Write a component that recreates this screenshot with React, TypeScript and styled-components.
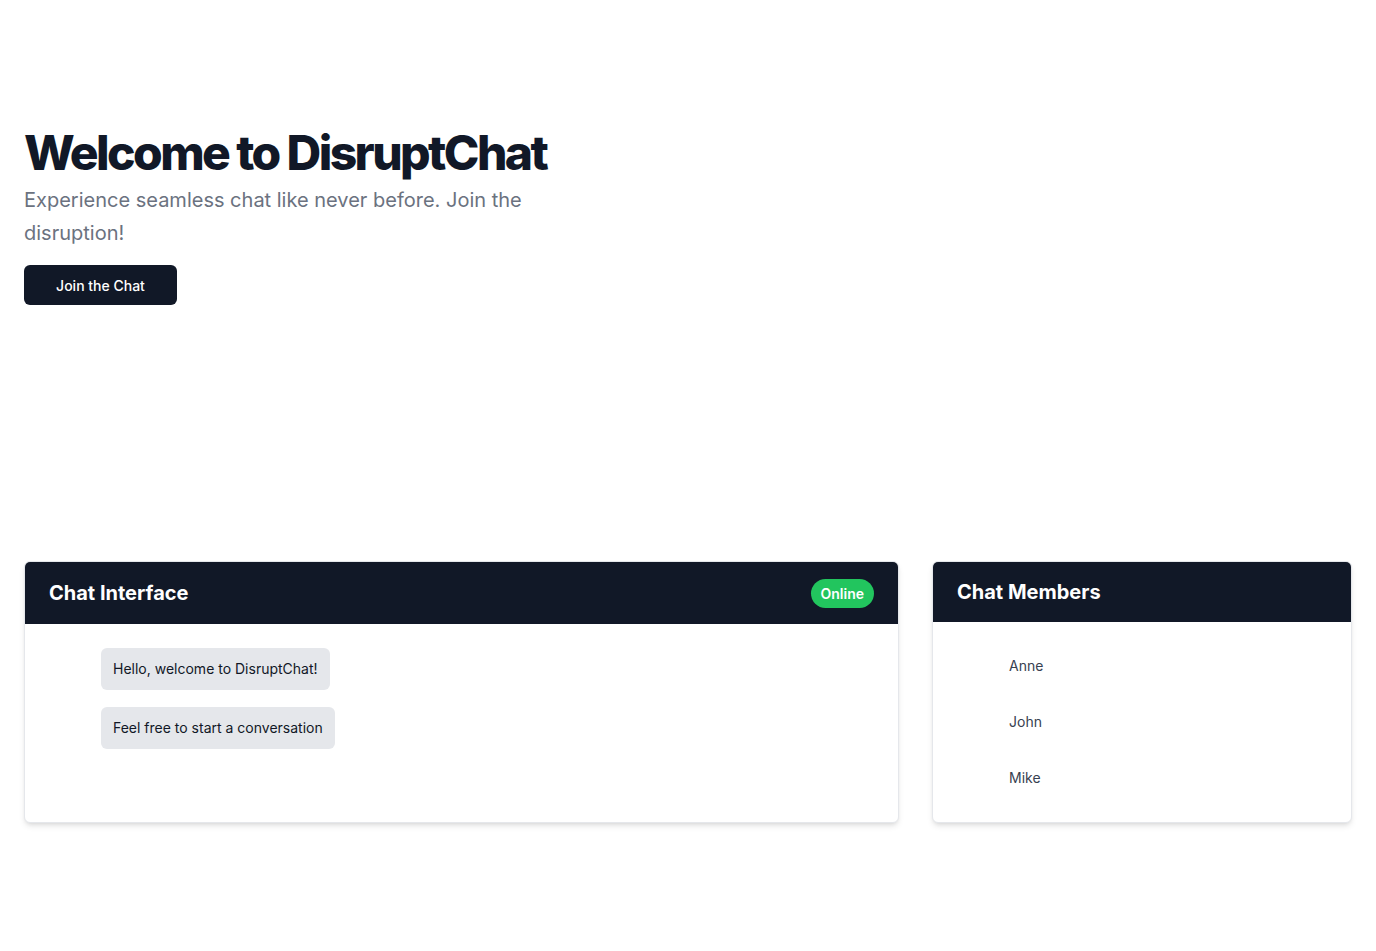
import React from "react";
import styled, { createGlobalStyle } from "styled-components";

const Global = createGlobalStyle`
  * { box-sizing: border-box; }
  body {
    margin: 0;
    background: #ffffff;
    font-family: Inter, "Noto Sans", sans-serif;
    color: #111827;
  }
`;

const Page = styled.div`
  padding: 24px;
`;

const Hero = styled.section`
  padding-top: 100px;
  padding-bottom: 256px;
  max-width: 560px;
`;

const Title = styled.h1`
  margin: 0;
  font-size: 48px;
  line-height: 58px;
  font-weight: 800;
  letter-spacing: -0.054em;
  color: #111827;
`;

const Subtitle = styled.p`
  margin: 2px 0 0;
  font-size: 20px;
  line-height: 32.5px;
  color: #6b7280;
  max-width: 512px;
`;

const PrimaryButton = styled.button`
  margin-top: 16px;
  height: 40px;
  width: 153px;
  border: none;
  border-radius: 6px;
  background: #111827;
  color: #ffffff;
  font-family: inherit;
  font-size: 14px;
  font-weight: 500;
  cursor: pointer;
`;

const Panels = styled.div`
  display: grid;
  grid-template-columns: 1fr 420px;
  gap: 33px;
`;

const Card = styled.div`
  display: flex;
  flex-direction: column;
  border: 1px solid #e5e7eb;
  border-radius: 6px;
  overflow: hidden;
  background: #ffffff;
  box-shadow: 0 4px 6px -1px rgba(0, 0, 0, 0.1), 0 2px 4px -2px rgba(0, 0, 0, 0.1);
`;

const CardHeader = styled.div<{ $tall?: boolean }>`
  display: flex;
  align-items: center;
  justify-content: space-between;
  background: #111827;
  padding: 16px 24px;
  min-height: ${(p) => (p.$tall ? "62px" : "60px")};
`;

const CardTitle = styled.h2`
  margin: 0;
  font-size: 20px;
  line-height: 28px;
  font-weight: 700;
  color: #ffffff;
`;

const Badge = styled.span`
  display: inline-flex;
  align-items: center;
  height: 29px;
  padding: 0 10px;
  border-radius: 9999px;
  background: #22c55e;
  color: #ffffff;
  font-size: 14px;
  font-weight: 600;
`;

const CardBody = styled.div<{ $gap: number }>`
  flex: 1;
  padding: 24px;
  display: flex;
  flex-direction: column;
  gap: ${(p) => p.$gap}px;
`;

const Bubble = styled.div`
  align-self: flex-start;
  margin-left: 52px;
  padding: 11px 12px;
  border-radius: 6px;
  background: #e5e7eb;
  font-size: 14px;
  line-height: 20px;
  color: #111827;
`;

const MemberRow = styled.div`
  display: flex;
  align-items: center;
  gap: 12px;
  height: 40px;
`;

const AvatarSlot = styled.div`
  width: 40px;
  height: 40px;
  flex-shrink: 0;
`;

const MemberName = styled.span`
  font-size: 14px;
  line-height: 20px;
  color: #374151;
`;

export default function App() {
  const members = ["Anne", "John", "Mike"];
  return (
    <>
      <Global />
      <Page>
        <Hero>
          <Title>Welcome to DisruptChat</Title>
          <Subtitle>Experience seamless chat like never before. Join the disruption!</Subtitle>
          <PrimaryButton>Join the Chat</PrimaryButton>
        </Hero>
        <Panels>
          <Card>
            <CardHeader $tall>
              <CardTitle>Chat Interface</CardTitle>
              <Badge>Online</Badge>
            </CardHeader>
            <CardBody $gap={17}>
              <Bubble>Hello, welcome to DisruptChat!</Bubble>
              <Bubble>Feel free to start a conversation</Bubble>
            </CardBody>
          </Card>
          <Card>
            <CardHeader>
              <CardTitle>Chat Members</CardTitle>
            </CardHeader>
            <CardBody $gap={16}>
              {members.map((m) => (
                <MemberRow key={m}>
                  <AvatarSlot />
                  <MemberName>{m}</MemberName>
                </MemberRow>
              ))}
            </CardBody>
          </Card>
        </Panels>
      </Page>
    </>
  );
}
